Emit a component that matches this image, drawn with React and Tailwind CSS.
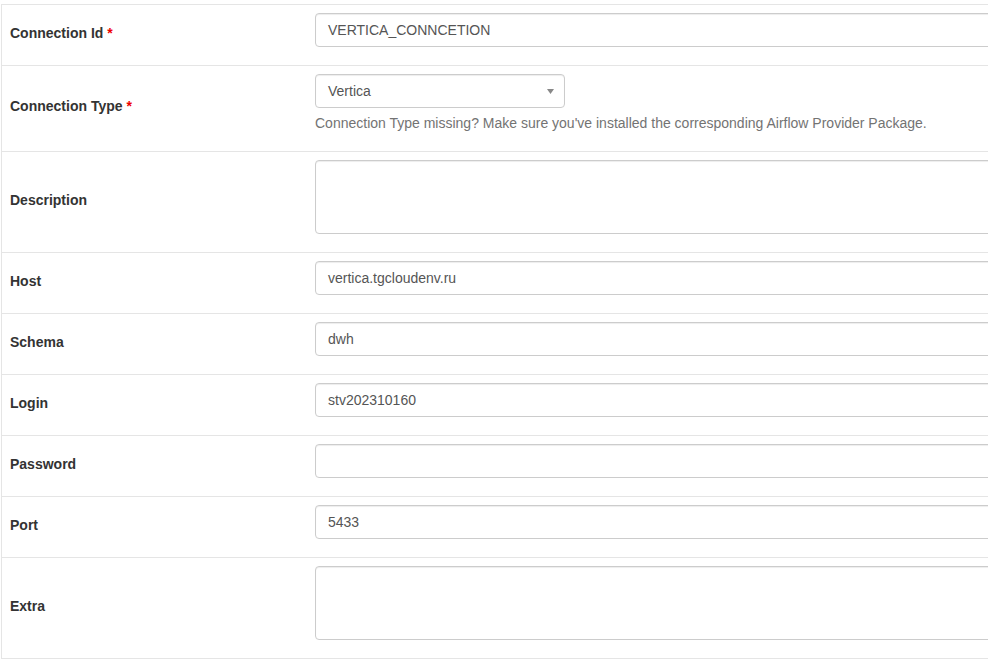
import React from "react";

const font = { fontFamily: '"Liberation Sans", Arial, Helvetica, sans-serif' };

function Field({ label, required, children }) {
  return (
    <div className="flex border-t border-[#e5e5e5]">
      <div className="w-[305px] shrink-0 px-2 flex items-center">
        <label className="mb-[5px] text-[14px] leading-[20px] font-bold text-[#333]">
          {label}
          {required && <span className="text-[#e00] font-bold"> *</span>}
        </label>
      </div>
      <div className="flex-1 pt-2 pb-[18px] px-2">{children}</div>
    </div>
  );
}

function TextInput({ value }) {
  return (
    <div className="h-[34px] border border-[#ccc] rounded-[4px] bg-white px-3 flex items-center text-[14px] text-[#555] shadow-[inset_0_1px_1px_rgba(0,0,0,0.075)]">
      {value}
    </div>
  );
}

function TextArea() {
  return (
    <div className="h-[74px] border border-[#ccc] rounded-[4px] bg-white shadow-[inset_0_1px_1px_rgba(0,0,0,0.075)]" />
  );
}

export default function App() {
  return (
    <div className="w-[988px] h-[661px] overflow-hidden bg-white" style={font}>
      <div className="pt-[4px] pl-[1px]">
        <div className="w-[1400px] border-l border-b border-[#e5e5e5]">
          <Field label="Connection Id" required>
            <TextInput value="VERTICA_CONNCETION" />
          </Field>
          <Field label="Connection Type" required>
            <div className="w-[250px] h-[34px] border border-[#ccc] rounded-[4px] bg-white pl-3 pr-[10px] flex items-center justify-between text-[14px] text-[#555] shadow-[inset_0_1px_1px_rgba(0,0,0,0.075)]">
              <span>Vertica</span>
              <svg width="7" height="5" viewBox="0 0 7 5">
                <path d="M0 0 L7 0 L3.5 5 Z" fill="#888" />
              </svg>
            </div>
            <p className="mt-[5px] text-[14px] leading-[20px] text-[#737373]">
              Connection Type missing? Make sure you've installed the corresponding Airflow Provider Package.
            </p>
          </Field>
          <Field label="Description">
            <TextArea />
          </Field>
          <Field label="Host">
            <TextInput value="vertica.tgcloudenv.ru" />
          </Field>
          <Field label="Schema">
            <TextInput value="dwh" />
          </Field>
          <Field label="Login">
            <TextInput value="stv202310160" />
          </Field>
          <Field label="Password">
            <TextInput value="" />
          </Field>
          <Field label="Port">
            <TextInput value="5433" />
          </Field>
          <Field label="Extra">
            <TextArea />
          </Field>
        </div>
      </div>
    </div>
  );
}
